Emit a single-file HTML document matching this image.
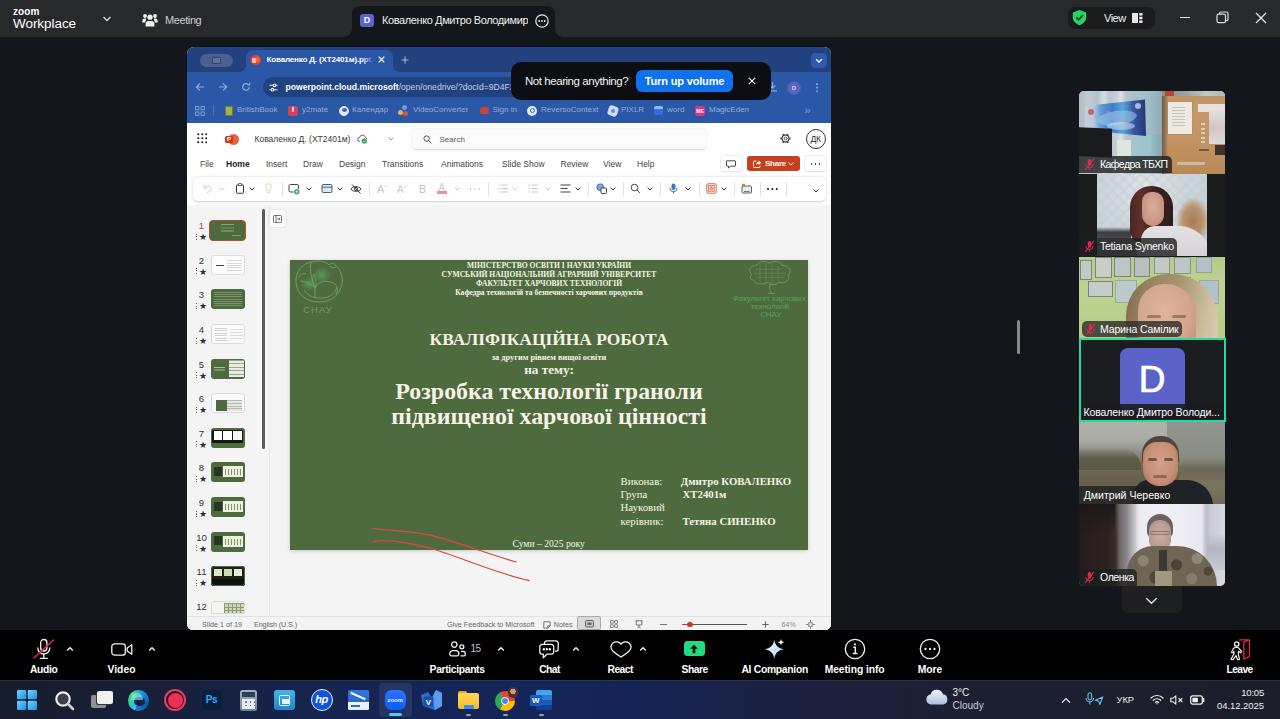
<!DOCTYPE html>
<html lang="uk">
<head>
<meta charset="utf-8">
<title>Zoom Meeting</title>
<style>
*{box-sizing:border-box;margin:0;padding:0}
html,body{width:1280px;height:719px;overflow:hidden;background:#13161a;font-family:"Liberation Sans",sans-serif;}
.a{position:absolute}
#root{position:relative;width:1280px;height:719px;overflow:hidden;background:#13161a}
/* top bar */
#top{left:0;top:0;width:1280px;height:37px;background:#28292b}
#top .t{color:#fff;white-space:nowrap}
/* shared screen */
#share{left:187px;top:47px;width:644px;height:583px;background:#f4f4f4;border-radius:7px 7px 6px 6px;overflow:hidden}
#tabstrip{left:0;top:0;width:644px;height:25px;background:#22417f}
#navbar{left:0;top:25px;width:644px;height:50.800px;background:#2b57a7}
#pphead{left:0;top:75px;width:644px;height:83px;background:#fff}
/* bottom zoom toolbar */
#zbar{left:0;top:630px;width:1280px;height:50px;background:#000}
#zbar .l{color:#fff;font-size:12px;font-weight:bold;white-space:nowrap;transform:translateX(-50%);top:32px;letter-spacing:-0.1px}
/* taskbar */
#task{left:0;top:680px;width:1280px;height:39px;background:linear-gradient(90deg,#171c2b 0%,#17213d 14%,#152452 28%,#14255a 42%,#162454 50%,#1b2142 60%,#1d2033 75%,#1c1e29 100%)}
/* tiles */
.tile{left:1079px;width:146px;height:82px;overflow:hidden;background:#1a1c1f}
.nm{left:0;bottom:0;height:17px;background:rgba(20,20,22,.72);color:#fff;font-size:12px;line-height:17px;white-space:nowrap;padding:0 5px 0 5px;border-radius:0 4px 0 0}
</style>
</head>
<body>
<div id="root">

<!-- TOP BAR -->
<div id="top" class="a">
  <div class="a t" style="left:13px;top:6px;font-size:10px;font-weight:bold;letter-spacing:.1px;line-height:11px">zoom</div>
  <div class="a t" style="left:13px;top:16px;font-size:13.5px;letter-spacing:-.05px;line-height:16px">Workplace</div>
  <svg class="a" style="left:102px;top:15px" width="10" height="8" viewBox="0 0 10 8"><path d="M1.5 2 L5 5.5 L8.5 2" fill="none" stroke="#ddd" stroke-width="1.3"/></svg>
  <svg class="a" style="left:142px;top:12px" width="16" height="16" viewBox="0 0 16 16" fill="#f2f2f2"><circle cx="8" cy="5.2" r="2.6"/><circle cx="3" cy="4" r="1.9"/><circle cx="13" cy="4" r="1.9"/><path d="M3.6 14.5 v-2.6 a3 3 0 0 1 3-3 h2.8 a3 3 0 0 1 3 3 v2.6 z"/><path d="M0.3 10.5 v-1.5 a2.4 2.4 0 0 1 2.4-2.4 h1.6 l-1.2 3.9z"/><path d="M15.7 10.5 v-1.5 a2.4 2.4 0 0 0 -2.4-2.4 h-1.6 l1.2 3.9z"/></svg>
  <div class="a t" style="left:165px;top:14px;font-size:11px;letter-spacing:-.4px;color:#cfcfcf">Meeting</div>
  <!-- active tab -->
  <div class="a" style="left:352px;top:6px;width:203px;height:31px;background:#13161a;border-radius:8px 8px 0 0"></div>
  <div class="a" style="left:344px;top:29px;width:8px;height:8px;background:radial-gradient(circle at 0 0,#28292b 7.5px,#13161a 8px)"></div>
  <div class="a" style="left:555px;top:29px;width:8px;height:8px;background:radial-gradient(circle at 100% 0,#28292b 7.5px,#13161a 8px)"></div>
  <div class="a" style="left:360px;top:14px;width:14px;height:13px;border-radius:3px;background:#5a63cf;color:#fff;font-size:9px;font-weight:bold;text-align:center;line-height:13px">D</div>
  <div class="a t" style="left:382px;top:14px;width:146px;overflow:hidden;font-size:11px;letter-spacing:-.4px;color:#f0f0f0">Коваленко Дмитро Володимирович</div>
  <svg class="a" style="left:534px;top:13px" width="16" height="16" viewBox="0 0 16 16"><circle cx="8" cy="8" r="6.2" fill="none" stroke="#e8e8e8" stroke-width="1.2"/><circle cx="5.2" cy="8" r=".9" fill="#e8e8e8"/><circle cx="8" cy="8" r=".9" fill="#e8e8e8"/><circle cx="10.8" cy="8" r=".9" fill="#e8e8e8"/></svg>
  <!-- view pill -->
  <div class="a" style="left:1068px;top:7px;width:87px;height:22px;border-radius:7px;background:#1a1b1d"></div>
  <svg class="a" style="left:1071px;top:9px" width="17" height="17" viewBox="0 0 17 17"><path d="M8.5 1 L15.2 3.4 V8.2 C15.2 12 12.2 14.8 8.5 16.2 C4.8 14.8 1.8 12 1.8 8.2 V3.4 Z" fill="#25d366"/><path d="M5.2 8.4 L7.6 10.8 L11.9 6.2" fill="none" stroke="#0b3d1c" stroke-width="1.7"/></svg>
  <div class="a t" style="left:1104px;top:12px;font-size:11px;letter-spacing:-.5px;color:#f0f0f0">View</div>
  <svg class="a" style="left:1132px;top:13px" width="11" height="10" viewBox="0 0 11 10" fill="#e8e8e8"><rect x="0" y="0" width="6" height="10"/><rect x="7.2" y="0" width="3.3" height="2.6"/><rect x="7.2" y="3.7" width="3.3" height="2.6"/><rect x="7.2" y="7.4" width="3.3" height="2.6"/></svg>
  <!-- window controls -->
  <div class="a" style="left:1180px;top:17px;width:10px;height:1.3px;background:#e0e0e0"></div>
  <svg class="a" style="left:1216px;top:11px" width="13" height="13" viewBox="0 0 13 13" fill="none" stroke="#e0e0e0" stroke-width="1.2"><rect x="1" y="3.2" width="8.5" height="8.5" rx="1.6"/><path d="M3.5 3 V2.4 A1.4 1.4 0 0 1 4.9 1 H10.4 A1.6 1.6 0 0 1 12 2.6 V8.2 A1.4 1.4 0 0 1 10.6 9.6 H9.8"/></svg>
  <svg class="a" style="left:1255px;top:12px" width="12" height="12" viewBox="0 0 12 12"><path d="M1 1 L11 11 M11 1 L1 11" stroke="#e8e8e8" stroke-width="1.3"/></svg>
</div>

<!-- SHARED SCREEN -->
<div id="share" class="a">
  <div id="tabstrip" class="a"></div>
  <div id="navbar" class="a"></div>
  <!-- tab search pill -->
  <div class="a" style="left:13px;top:7px;width:33px;height:12.5px;border-radius:7px;background:#4b608f"></div>
  <div class="a" style="left:25px;top:10px;width:9px;height:7px;border:1px solid #2d4272;border-radius:1px;background:#5d719c"></div>
  <!-- active tab -->
  <div class="a" style="left:59px;top:3px;width:147px;height:22px;background:#2b57a7;border-radius:7px 7px 0 0"></div>
  <div class="a" style="left:53px;top:19px;width:6px;height:6px;background:radial-gradient(circle at 0 0,#22417f 5.5px,#2b57a7 6px)"></div>
  <div class="a" style="left:206px;top:19px;width:6px;height:6px;background:radial-gradient(circle at 100% 0,#22417f 5.5px,#2b57a7 6px)"></div>
  <div class="a" style="left:63px;top:7.5px;width:10.5px;height:10.5px;border-radius:50%;background:radial-gradient(circle at 60% 45%,#ff7a4a 0,#e2432a 45%,#c8331f 100%)"></div>
  <div class="a" style="left:65px;top:10.5px;width:4px;height:5px;background:#f7d9cf;border-radius:1px;opacity:.85"></div>
  <div class="a" style="left:79.5px;top:7.5px;width:105px;overflow:hidden;white-space:nowrap;color:#fff;font-size:8px;font-weight:bold;letter-spacing:-.15px;line-height:10px">Коваленко Д. (ХТ2401м).pptx</div>
  <div class="a" style="left:176px;top:6px;width:10px;height:13px;background:linear-gradient(90deg,rgba(44,88,169,0),#2b57a7)"></div>
  <svg class="a" style="left:191px;top:9px" width="7" height="7" viewBox="0 0 7 7"><path d="M.7 .7 L6.3 6.3 M6.3 .7 L.7 6.3" stroke="#fff" stroke-width="1.2"/></svg>
  <svg class="a" style="left:213.500px;top:8.5px" width="8" height="8" viewBox="0 0 8 8"><path d="M4 .5 V7.500 M.5 4 H7.500" stroke="#9db3dc" stroke-width="1.100"/></svg>
  <!-- chevron btn -->
  <div class="a" style="left:623.500px;top:5.500px;width:16.500px;height:15.500px;border-radius:4.500px;background:#305aab"></div>
  <svg class="a" style="left:628px;top:10.500px" width="8" height="6" viewBox="0 0 8 6"><path d="M1.200 1.300 L4 4.100 L6.800 1.300" fill="none" stroke="#fff" stroke-width="1.300"/></svg>
  <!-- nav icons -->
  <svg class="a" style="left:8px;top:35px" width="10" height="10" viewBox="0 0 10 10" fill="none" stroke="#8fa9dc" stroke-width="1.200"><path d="M9 5 H1.500 M5 1.300 L1.300 5 L5 8.700"/></svg>
  <svg class="a" style="left:31px;top:35px" width="10" height="10" viewBox="0 0 10 10" fill="none" stroke="#8fa9dc" stroke-width="1.200"><path d="M1 5 H8.500 M5 1.300 L8.700 5 L5 8.700"/></svg>
  <svg class="a" style="left:54px;top:35px" width="10" height="10" viewBox="0 0 10 10" fill="none" stroke="#8fa9dc" stroke-width="1.200"><path d="M8.300 5 A3.300 3.300 0 1 1 7.300 2.600 M8.600 .8 V3 H6.400"/></svg>
  <!-- url pill -->
  <div class="a" style="left:76px;top:30px;width:470px;height:19.500px;border-radius:10px;background:#20427f"></div>
  <svg class="a" style="left:82px;top:35.500px" width="9" height="9" viewBox="0 0 9 9" fill="none" stroke="#e6ecf8" stroke-width="1.100"><path d="M.5 2.300 H4 M7 2.300 H8.500 M.5 6.700 H2 M5 6.700 H8.500"/><circle cx="5.500" cy="2.300" r="1.300"/><circle cx="3.500" cy="6.700" r="1.300"/></svg>
  <div class="a" style="left:98.500px;top:34.500px;white-space:nowrap;color:#fff;font-size:8.600px;font-weight:bold;line-height:11px">powerpoint.cloud.microsoft<span style="font-weight:normal;color:#c3cfea">/open/onedrive/?docId=9D4F2A7C&amp;wdo=2</span></div>
  <!-- nav right -->
  <svg class="a" style="left:580px;top:34px" width="11" height="11" viewBox="0 0 11 11" fill="none" stroke="#8fa9dc" stroke-width="1.200"><path d="M5.500 1 V7 M2.800 4.500 L5.500 7.200 L8.200 4.500 M1 9.800 H10"/></svg>
  <div class="a" style="left:601px;top:34.500px;width:12px;height:12px;border-radius:50%;background:#5f62c4;box-shadow:0 0 0 1px rgba(110,110,210,.45);color:#d9d6f5;font-size:6px;font-weight:bold;text-align:center;line-height:12px">D</div>
  <div class="a" style="left:629.200px;top:36px;width:1.700px;height:1.700px;border-radius:50%;background:#7f9bd6;box-shadow:0 3.600px 0 #7f9bd6,0 7.200px 0 #7f9bd6"></div>
  <!-- bookmarks -->
  <div id="bm" class="a" style="left:0;top:54px;width:644px;height:22px;font-size:8px;color:#96acd9;white-space:nowrap;line-height:18px">
    <svg class="a" style="left:7.500px;top:4.500px" width="10" height="10" viewBox="0 0 10 10" fill="none" stroke="#7f9ad2" stroke-width="1"><rect x=".5" y=".5" width="3.300" height="3.300"/><rect x="6" y=".5" width="3.300" height="3.300"/><rect x=".5" y="6" width="3.300" height="3.300"/><rect x="6" y="6" width="3.300" height="3.300"/></svg>
    <div class="a" style="left:26px;top:4px;width:1px;height:11px;background:#4a6db5"></div>
    <div class="a" style="left:38px;top:4.500px;width:7.500px;height:10px;background:#a8b24a;border:1.500px solid #6f7d2c;border-radius:1px"></div>
    <div class="a" style="left:50px;top:0">BritishBook</div>
    <div class="a" style="left:101px;top:4.500px;width:9.500px;height:10px;background:#d2415a;border-radius:2px"></div>
    <div class="a" style="left:104.500px;top:6px;width:2.500px;height:5px;background:#f6d0d6"></div>
    <div class="a" style="left:115px;top:0">y2mate</div>
    <div class="a" style="left:152px;top:4.500px;width:10px;height:10px;border-radius:50%;background:#e8eef9;border:1.500px solid #dfe7f6"></div>
    <div class="a" style="left:155px;top:7px;width:5px;height:4px;border-radius:50%;background:#3b66b6"></div>
    <div class="a" style="left:165px;top:0">Календар</div>
    <div class="a" style="left:211px;top:9px;width:5px;height:5px;border-radius:50%;background:#e9b43a"></div>
    <div class="a" style="left:216px;top:9.500px;width:5px;height:5px;border-radius:50%;background:#d9534f"></div>
    <div class="a" style="left:214.500px;top:4px;width:5px;height:5px;border-radius:50%;background:#5fa0e8"></div>
    <div class="a" style="left:226px;top:0">VideoConverter</div>
    <div class="a" style="left:293px;top:6px;width:9px;height:7px;border-radius:2px;background:#c8413f"></div>
    <div class="a" style="left:305.500px;top:0">Sign in</div>
    <div class="a" style="left:340px;top:4.500px;width:10px;height:10px;border-radius:50%;background:#e4ebf8"></div>
    <div class="a" style="left:342.500px;top:7px;width:5px;height:5px;border-radius:50%;border:1.500px solid #3b66b6"></div>
    <div class="a" style="left:354px;top:0">ReversoContext</div>
    <div class="a" style="left:421px;top:4.500px;width:10px;height:10px;border-radius:3px;background:#cfdcf3;transform:rotate(20deg)"></div>
    <div class="a" style="left:424px;top:7.500px;width:4px;height:4px;border-radius:50%;background:#5f8fe0"></div>
    <div class="a" style="left:434px;top:0">PIXLR</div>
    <div class="a" style="left:467px;top:5px;width:9px;height:9px;border-radius:2px;background:#2f6fe0;border-top:3px solid #8fb8f5"></div>
    <div class="a" style="left:480px;top:0">word</div>
    <div class="a" style="left:508px;top:4.500px;width:10px;height:10px;border-radius:2px;background:#d6357f;color:#fff;font-size:5px;font-weight:bold;line-height:10px;text-align:center">ME</div>
    <div class="a" style="left:522px;top:0">MagicEden</div>
    <div class="a" style="left:617.500px;top:0;font-size:11px;color:#7f9bd6">»</div>
  </div>
  <div class="a" style="left:0;top:75.800px;width:644px;height:83.200px;background:#fff"></div>
  <div class="a" style="left:0;top:158px;width:644px;height:425px;background:#f4f4f4"></div>
  <svg class="a" style="left:9.5px;top:86px" width="10.500" height="10.500" viewBox="0 0 10.200 10.200" fill="#222"><circle cx="1.2" cy="1.2" r="1.050"/><circle cx="1.2" cy="5.1" r="1.050"/><circle cx="1.2" cy="9.0" r="1.050"/><circle cx="5.1" cy="1.2" r="1.050"/><circle cx="5.1" cy="5.1" r="1.050"/><circle cx="5.1" cy="9.0" r="1.050"/><circle cx="9.0" cy="1.2" r="1.050"/><circle cx="9.0" cy="5.1" r="1.050"/><circle cx="9.0" cy="9.0" r="1.050"/></svg>
  <div class="a" style="left:41px;top:86.5px;width:11px;height:11px;border-radius:50%;background:#e8603c"></div>
  <div class="a" style="left:38px;top:88.5px;width:8px;height:7.500px;border-radius:1.500px;background:#c43e1c;color:#fff;font-size:6px;font-weight:bold;line-height:7.500px;text-align:center">P</div>
  <div class="a" style="left:67.5px;top:86.700px;font-size:8.500px;color:#3a3a3a;white-space:nowrap;line-height:11px">Коваленко Д. (ХТ2401м)</div>
  <svg class="a" style="left:169.5px;top:87px" width="11" height="10" viewBox="0 0 11 10"><path d="M3 7.500 H2.600 A2 2 0 0 1 2.600 3.500 A3 3 0 0 1 8.400 3.200 A2.100 2.100 0 0 1 9.600 5" fill="none" stroke="#666" stroke-width="1"/><circle cx="7.300" cy="7" r="2.600" fill="#2e9b57"/><path d="M6.100 7 L7 7.900 L8.500 6.200" fill="none" stroke="#fff" stroke-width=".8"/></svg>
  <svg class="a" style="left:201px;top:90px" width="6" height="4" viewBox="0 0 6 4"><path d="M.6 .6 L3 3 L5.400 .6" fill="none" stroke="#999" stroke-width="1"/></svg>
  <div class="a" style="left:225px;top:82px;width:294px;height:20px;border-radius:4px;background:#fbfbfb;box-shadow:0 .5px 2px rgba(0,0,0,.16)"></div>
  <svg class="a" style="left:236px;top:87.5px" width="9" height="9" viewBox="0 0 9 9" fill="none" stroke="#555" stroke-width="1"><circle cx="3.600" cy="3.600" r="2.700"/><path d="M5.600 5.600 L8.300 8.300"/></svg>
  <div class="a" style="left:252.5px;top:86.5px;font-size:8px;color:#555;line-height:11px">Search</div>
  <svg class="a" style="left:593.30px;top:86.00px" width="11" height="11" viewBox="0 0 11 11" fill="none" stroke="#3a3a3a"><circle cx="5.500" cy="5.500" r="3.500" stroke-width="1" fill="#fff"/><path d="M9.20 5.50 L10.50 5.50" stroke-width="2.100"/><path d="M7.35 8.70 L8.00 9.83" stroke-width="2.100"/><path d="M3.65 8.70 L3.00 9.83" stroke-width="2.100"/><path d="M1.80 5.50 L0.50 5.50" stroke-width="2.100"/><path d="M3.65 2.30 L3.00 1.17" stroke-width="2.100"/><path d="M7.35 2.30 L8.00 1.17" stroke-width="2.100"/><circle cx="5.500" cy="5.500" r="3" stroke="none" fill="#fff"/><circle cx="5.500" cy="5.500" r="3.500" stroke-width=".9"/><circle cx="5.500" cy="5.500" r="1.400" stroke-width=".9"/></svg>
  <div class="a" style="left:618.5px;top:81.8px;width:20px;height:20px;border-radius:50%;border:1px solid #333;color:#2a2a2a;font-size:8.500px;line-height:18.500px;text-align:center;letter-spacing:-.3px">ДК</div>
  <div class="a" style="left:13px;top:111.700px;font-size:8.500px;color:#444;white-space:nowrap;line-height:11px">File</div>
  <div class="a" style="left:39px;top:111.700px;font-size:8.500px;font-weight:bold;color:#222;white-space:nowrap;line-height:11px">Home</div>
  <div class="a" style="left:79px;top:111.700px;font-size:8.500px;color:#444;white-space:nowrap;line-height:11px">Insert</div>
  <div class="a" style="left:116px;top:111.700px;font-size:8.500px;color:#444;white-space:nowrap;line-height:11px">Draw</div>
  <div class="a" style="left:152px;top:111.700px;font-size:8.500px;color:#444;white-space:nowrap;line-height:11px">Design</div>
  <div class="a" style="left:195px;top:111.700px;font-size:8.500px;color:#444;white-space:nowrap;line-height:11px">Transitions</div>
  <div class="a" style="left:254px;top:111.700px;font-size:8.500px;color:#444;white-space:nowrap;line-height:11px">Animations</div>
  <div class="a" style="left:315px;top:111.700px;font-size:8.500px;color:#444;white-space:nowrap;line-height:11px">Slide Show</div>
  <div class="a" style="left:373.5px;top:111.700px;font-size:8.500px;color:#444;white-space:nowrap;line-height:11px">Review</div>
  <div class="a" style="left:416px;top:111.700px;font-size:8.500px;color:#444;white-space:nowrap;line-height:11px">View</div>
  <div class="a" style="left:450px;top:111.700px;font-size:8.500px;color:#444;white-space:nowrap;line-height:11px">Help</div>
  <div class="a" style="left:534px;top:109px;width:20.500px;height:15px;border-radius:3px;background:#fff;box-shadow:0 0 0 .6px #e4e4e4,0 .5px 1.500px rgba(0,0,0,.14)"></div>
  <svg class="a" style="left:539px;top:112.5px" width="10" height="9" viewBox="0 0 10 9" fill="none" stroke="#333" stroke-width=".9"><path d="M1 .8 H9 A.5 .5 0 0 1 9.500 1.300 V5.700 A.5 .5 0 0 1 9 6.200 H4.500 L2.500 8 V6.200 H1 A.5 .5 0 0 1 .5 5.700 V1.300 A.5 .5 0 0 1 1 .8Z"/></svg>
  <div class="a" style="left:560px;top:109px;width:52.500px;height:15px;border-radius:3px;background:#c6401d"></div>
  <svg class="a" style="left:565.5px;top:112.5px" width="9" height="8" viewBox="0 0 9 8" fill="none" stroke="#fff" stroke-width=".9"><path d="M3.500 1 H1.500 A1 1 0 0 0 .5 2 V6.500 A1 1 0 0 0 1.500 7.500 H6 A1 1 0 0 0 7 6.500 V5.800"/><path d="M5.500 .6 L8.300 2.800 L5.500 5 V3.700 C4.300 3.700 3.500 4.200 3 5.200 C3 3.300 4 2.100 5.500 1.900Z" fill="#fff" stroke="none"/></svg>
  <div class="a" style="left:578px;top:111px;font-size:8px;font-weight:bold;color:#fff;line-height:11px;letter-spacing:-.25px">Share</div>
  <svg class="a" style="left:600.5px;top:115px" width="6" height="4" viewBox="0 0 6 4"><path d="M.6 .6 L3 3 L5.400 .6" fill="none" stroke="#fff" stroke-width="1"/></svg>
  <div class="a" style="left:618px;top:109px;width:20.500px;height:15px;border-radius:3px;background:#fff;box-shadow:0 0 0 .6px #e4e4e4,0 .5px 1.500px rgba(0,0,0,.14)"></div>
  <div class="a" style="left:623.5px;top:116px;width:1.600px;height:1.600px;border-radius:50%;background:#333;box-shadow:4px 0 0 #333,8px 0 0 #333"></div>
  <div class="a" style="left:5.5px;top:129.5px;width:633.500px;height:24.500px;border-radius:5px;background:#fff;box-shadow:0 .5px 2.500px rgba(0,0,0,.2)"></div>
  <svg class="a" style="left:14.5px;top:136.2px" width="11" height="11" viewBox="0 0 11 11" fill="none"><path d="M2 1.500 V5 H5.500 M2.200 4.800 C3.500 2.500 7 2 8.500 4.200 C9.800 6.200 8 8.500 5 9.700" stroke="#c8c8c8" stroke-width="1"/></svg>
  <svg class="a" style="left:31.5px;top:139.7px" width="6" height="4" viewBox="0 0 6 4"><path d="M.6 .6 L3 3 L5.400 .6" fill="none" stroke="#c8c8c8" stroke-width="1"/></svg>
  <svg class="a" style="left:48.0px;top:136.2px" width="10" height="11" viewBox="0 0 10 11" fill="none"><rect x="1.500" y="1.800" width="7" height="8.500" rx="1" stroke="#333" stroke-width="1"/><rect x="3.300" y=".6" width="3.400" height="2" rx=".6" fill="#fff" stroke="#333" stroke-width=".8"/></svg>
  <svg class="a" style="left:61.5px;top:139.7px" width="6" height="4" viewBox="0 0 6 4"><path d="M.6 .6 L3 3 L5.400 .6" fill="none" stroke="#333" stroke-width="1"/></svg>
  <svg class="a" style="left:76.8px;top:136.2px" width="9" height="11" viewBox="0 0 9 11" fill="none"><path d="M2 1 H7 V5 L5.800 6 V9.500 H3.200 V6 L2 5Z" stroke="#e6d6a8" stroke-width="1"/></svg>
  <div class="a" style="left:94.5px;top:135px;width:1px;height:14px;background:#e2e2e2"></div>
  <svg class="a" style="left:101.0px;top:135.7px" width="12" height="12" viewBox="0 0 12 12" fill="none"><rect x="1" y="1.500" width="9.500" height="7.500" rx="1.400" stroke="#444" stroke-width="1"/><circle cx="8.800" cy="8.800" r="3" fill="#2e9b57" stroke="#fff" stroke-width=".7"/><path d="M8.800 7.300 V10.300 M7.300 8.800 H10.300" stroke="#fff" stroke-width=".8"/></svg>
  <svg class="a" style="left:119px;top:139.7px" width="6" height="4" viewBox="0 0 6 4"><path d="M.6 .6 L3 3 L5.400 .6" fill="none" stroke="#333" stroke-width="1"/></svg>
  <svg class="a" style="left:134.3px;top:136.2px" width="12" height="11" viewBox="0 0 12 11" fill="none"><rect x="1" y="1.500" width="10" height="8" rx="1.200" stroke="#3f5f80" stroke-width="1" fill="#dfe9f3"/><path d="M1 4.200 H11" stroke="#3f5f80" stroke-width=".9"/></svg>
  <svg class="a" style="left:149.5px;top:139.7px" width="6" height="4" viewBox="0 0 6 4"><path d="M.6 .6 L3 3 L5.400 .6" fill="none" stroke="#333" stroke-width="1"/></svg>
  <svg class="a" style="left:163.0px;top:135.7px" width="12" height="12" viewBox="0 0 12 12" fill="none"><path d="M1 6 C3 2.800 9 2.800 11 6 C9 9.200 3 9.200 1 6Z" stroke="#333" stroke-width=".9"/><circle cx="6" cy="6" r="1.600" stroke="#333" stroke-width=".9"/><path d="M2 1.500 L10.500 10.500" stroke="#333" stroke-width="1"/></svg>
  <div class="a" style="left:182px;top:135px;width:1px;height:14px;background:#e2e2e2"></div>
  <div class="a" style="left:190px;top:135.5px;font-size:11px;color:#c8c8c8;line-height:13px">A<span style="font-size:6px;vertical-align:top;line-height:8px">^</span></div>
  <div class="a" style="left:210px;top:136px;font-size:10px;color:#c8c8c8;line-height:13px">A<span style="font-size:6px;vertical-align:top;line-height:8px">˅</span></div>
  <div class="a" style="left:232px;top:135.5px;font-size:10.500px;color:#c0c0c0;line-height:13px">B</div>
  <div class="a" style="left:251.5px;top:134.5px;font-size:10px;color:#c8c8c8;line-height:12px">A</div>
  <div class="a" style="left:250px;top:144.3px;width:10px;height:3px;background:#ef8f9a;border-radius:.5px"></div>
  <svg class="a" style="left:266.5px;top:139.7px" width="6" height="4" viewBox="0 0 6 4"><path d="M.6 .6 L3 3 L5.400 .6" fill="none" stroke="#c8c8c8" stroke-width="1"/></svg>
  <div class="a" style="left:282.5px;top:141px;width:1.600px;height:1.600px;border-radius:50%;background:#bbb;box-shadow:4.400px 0 0 #bbb,8.800px 0 0 #bbb"></div>
  <div class="a" style="left:301px;top:135px;width:1px;height:14px;background:#e2e2e2"></div>
  <svg class="a" style="left:310.5px;top:136.2px" width="11" height="11" viewBox="0 0 11 11" fill="none"><path d="M3 2 H10 M3 5.500 H10 M3 9 H10" stroke="#c8c8c8" stroke-width="1"/><circle cx="1" cy="2" r=".7" fill="#c8c8c8"/><circle cx="1" cy="5.500" r=".7" fill="#c8c8c8"/><circle cx="1" cy="9" r=".7" fill="#c8c8c8"/></svg>
  <svg class="a" style="left:324.6px;top:139.7px" width="6" height="4" viewBox="0 0 6 4"><path d="M.6 .6 L3 3 L5.400 .6" fill="none" stroke="#c8c8c8" stroke-width="1"/></svg>
  <svg class="a" style="left:340.5px;top:136.2px" width="11" height="11" viewBox="0 0 11 11" fill="none"><path d="M3.500 2 H10 M3.500 5.500 H10 M3.500 9 H10" stroke="#c8c8c8" stroke-width="1"/><path d="M1 1 V3 M1 4.500 V6.500 M1 8 V10" stroke="#c8c8c8" stroke-width=".8"/></svg>
  <svg class="a" style="left:358px;top:139.7px" width="6" height="4" viewBox="0 0 6 4"><path d="M.6 .6 L3 3 L5.400 .6" fill="none" stroke="#c8c8c8" stroke-width="1"/></svg>
  <svg class="a" style="left:372.5px;top:136.2px" width="11" height="11" viewBox="0 0 11 11" fill="none"><path d="M.5 2 H10.500 M.5 5.500 H7.500 M.5 9 H10.500" stroke="#444" stroke-width="1"/></svg>
  <svg class="a" style="left:388px;top:139.7px" width="6" height="4" viewBox="0 0 6 4"><path d="M.6 .6 L3 3 L5.400 .6" fill="none" stroke="#333" stroke-width="1"/></svg>
  <div class="a" style="left:400.6px;top:135px;width:1px;height:14px;background:#e2e2e2"></div>
  <svg class="a" style="left:408.5px;top:136.2px" width="11" height="11" viewBox="0 0 11 11" fill="none"><circle cx="4.300" cy="4.300" r="3.500" fill="#7aa7d8" stroke="#3d6fa8" stroke-width=".8"/><rect x="5" y="5" width="5.500" height="5.500" rx="1" fill="#fff" stroke="#333" stroke-width=".9"/></svg>
  <svg class="a" style="left:423px;top:139.7px" width="6" height="4" viewBox="0 0 6 4"><path d="M.6 .6 L3 3 L5.400 .6" fill="none" stroke="#333" stroke-width="1"/></svg>
  <div class="a" style="left:435.7px;top:135px;width:1px;height:14px;background:#e2e2e2"></div>
  <svg class="a" style="left:442.5px;top:136.2px" width="11" height="11" viewBox="0 0 11 11" fill="none"><circle cx="4.500" cy="4.500" r="3.300" stroke="#444" stroke-width="1"/><path d="M7 7 L10 10" stroke="#444" stroke-width="1"/></svg>
  <svg class="a" style="left:459.5px;top:139.7px" width="6" height="4" viewBox="0 0 6 4"><path d="M.6 .6 L3 3 L5.400 .6" fill="none" stroke="#333" stroke-width="1"/></svg>
  <div class="a" style="left:473px;top:135px;width:1px;height:14px;background:#e2e2e2"></div>
  <svg class="a" style="left:480.5px;top:136.2px" width="11" height="11" viewBox="0 0 11 11" fill="none"><rect x="3.500" y=".5" width="4" height="6.500" rx="2" fill="#3c78c8"/><path d="M1.800 5 A3.700 3.700 0 0 0 9.200 5 M5.500 8.700 V10.500" stroke="#2f5f9f" stroke-width=".9"/></svg>
  <svg class="a" style="left:498px;top:139.7px" width="6" height="4" viewBox="0 0 6 4"><path d="M.6 .6 L3 3 L5.400 .6" fill="none" stroke="#333" stroke-width="1"/></svg>
  <div class="a" style="left:512px;top:135px;width:1px;height:14px;background:#e2e2e2"></div>
  <svg class="a" style="left:519.2px;top:136.2px" width="11" height="11" viewBox="0 0 11 11" fill="none"><rect x=".8" y=".8" width="9.400" height="9.400" rx="1" stroke="#c75a3a" stroke-width=".9"/><rect x="2.600" y="2.600" width="2.400" height="2.400" stroke="#c75a3a" stroke-width=".7"/><rect x="6" y="2.600" width="2.400" height="2.400" stroke="#c75a3a" stroke-width=".7"/><rect x="2.600" y="6" width="2.400" height="2.400" stroke="#c75a3a" stroke-width=".7"/><rect x="6" y="6" width="2.400" height="2.400" stroke="#c75a3a" stroke-width=".7"/></svg>
  <svg class="a" style="left:534.4px;top:139.7px" width="6" height="4" viewBox="0 0 6 4"><path d="M.6 .6 L3 3 L5.400 .6" fill="none" stroke="#333" stroke-width="1"/></svg>
  <div class="a" style="left:546.7px;top:135px;width:1px;height:14px;background:#e2e2e2"></div>
  <svg class="a" style="left:554.0px;top:136.2px" width="11" height="11" viewBox="0 0 11 11" fill="none"><rect x="1" y="3" width="9.500" height="7" rx="1" stroke="#555" stroke-width=".9" fill="#e3ecf5"/><rect x="1" y=".8" width="3" height="3" fill="#d9822b"/><path d="M3 8.500 H8.500" stroke="#555" stroke-width=".8"/></svg>
  <div class="a" style="left:572.5px;top:135px;width:1px;height:14px;background:#e2e2e2"></div>
  <div class="a" style="left:580px;top:141px;width:1.700px;height:1.700px;border-radius:50%;background:#333;box-shadow:4.400px 0 0 #333,8.800px 0 0 #333"></div>
  <div class="a" style="left:598.5px;top:135px;width:1px;height:14px;background:#e2e2e2"></div>
  <svg class="a" style="left:625.5px;top:142.4px" width="6" height="4" viewBox="0 0 6 4"><path d="M.6 .6 L3 3 L5.400 .6" fill="none" stroke="#333" stroke-width="1"/></svg>
  <div class="a" style="left:81.5px;top:163px;width:17.500px;height:17px;border-radius:3px;background:#fbfbfb;box-shadow:0 0 0 .6px #dedede"></div>
  <svg class="a" style="left:85.5px;top:167.5px" width="9" height="8" viewBox="0 0 9 8" fill="none" stroke="#555" stroke-width=".8"><rect x=".5" y=".5" width="8" height="7" rx=".8"/><path d="M3 .5 V7.500 M4.300 4 H7 M5.800 2.800 L7 4 L5.800 5.200"/></svg>
  <div class="a" style="left:82px;top:159px;width:1px;height:410px;background:#e6e6e6"></div>
  <div class="a" style="left:75px;top:161.5px;width:3px;height:240px;border-radius:1.500px;background:#5a5a5a"></div>
  <div class="a" style="left:8.500px;top:174px;width:12px;text-align:center;font-size:9.5px;color:#c43e1c;line-height:10px">1</div>
  <div class="a" style="left:12px;top:185.00px;font-size:9px;color:#2a2a2a;line-height:10px">★</div>
  <div class="a" style="left:8.500px;top:186.50px;width:1px;height:6px;background:repeating-linear-gradient(#666 0 1px,transparent 1px 2.500px)"></div>
  <div class="a" style="left:21.500px;top:172.500px;width:37.500px;height:21.500px;border-radius:4px;background:#4e6b3f;border:1.800px solid #b5502c"></div>
  <div class="a" style="left:34px;top:177px;width:13px;height:1px;background:#8fa382;box-shadow:0 3.500px 0 #7f9572,0 6.500px 0 #98ab8b"></div>
  <div class="a" style="left:45px;top:188px;width:9px;height:1px;background:#82976f"></div>
  <div class="a" style="left:8.500px;top:208.7px;width:12px;text-align:center;font-size:9.5px;color:#333;line-height:10px">2</div>
  <div class="a" style="left:12px;top:219.70px;font-size:9px;color:#2a2a2a;line-height:10px">★</div>
  <div class="a" style="left:8.500px;top:221.20px;width:1px;height:6px;background:repeating-linear-gradient(#666 0 1px,transparent 1px 2.500px)"></div>
  <div class="a" style="left:23.5px;top:207.7px;width:34px;height:20px;border-radius:3px;background:#fdfdfd;border:.6px solid #dcdcdc;overflow:hidden"><div class="a" style="left:4px;top:9px;width:8px;height:1.500px;background:#444"></div><div class="a" style="left:15px;top:4px;width:15px;height:12px;background:repeating-linear-gradient(#d8d8d8 0 1px,transparent 1px 2.500px)"></div></div>
  <div class="a" style="left:8.500px;top:243.3px;width:12px;text-align:center;font-size:9.5px;color:#333;line-height:10px">3</div>
  <div class="a" style="left:12px;top:254.30px;font-size:9px;color:#2a2a2a;line-height:10px">★</div>
  <div class="a" style="left:8.500px;top:255.80px;width:1px;height:6px;background:repeating-linear-gradient(#666 0 1px,transparent 1px 2.500px)"></div>
  <div class="a" style="left:23.5px;top:242.3px;width:34px;height:20px;border-radius:3px;background:#4e6b3f;overflow:hidden"><div class="a" style="left:3px;top:3px;width:28px;height:14px;background:repeating-linear-gradient(#7b9170 0 1px,transparent 1px 2.200px)"></div></div>
  <div class="a" style="left:8.500px;top:278px;width:12px;text-align:center;font-size:9.5px;color:#333;line-height:10px">4</div>
  <div class="a" style="left:12px;top:289.00px;font-size:9px;color:#2a2a2a;line-height:10px">★</div>
  <div class="a" style="left:8.500px;top:290.50px;width:1px;height:6px;background:repeating-linear-gradient(#666 0 1px,transparent 1px 2.500px)"></div>
  <div class="a" style="left:23.5px;top:277px;width:34px;height:20px;border-radius:3px;background:#fbfbfb;border:.6px solid #dcdcdc;overflow:hidden"><div class="a" style="left:3px;top:3px;width:12px;height:14px;background:repeating-linear-gradient(#d0d0d0 0 1px,transparent 1px 2.500px)"></div><div class="a" style="left:18px;top:4px;width:13px;height:11px;background:repeating-linear-gradient(#dcdcdc 0 1px,transparent 1px 3px)"></div></div>
  <div class="a" style="left:8.500px;top:312.5px;width:12px;text-align:center;font-size:9.5px;color:#333;line-height:10px">5</div>
  <div class="a" style="left:12px;top:323.50px;font-size:9px;color:#2a2a2a;line-height:10px">★</div>
  <div class="a" style="left:8.500px;top:325.00px;width:1px;height:6px;background:repeating-linear-gradient(#666 0 1px,transparent 1px 2.500px)"></div>
  <div class="a" style="left:23.5px;top:311.5px;width:34px;height:20px;border-radius:3px;background:#4e6b3f;overflow:hidden"><div class="a" style="left:18px;top:1.500px;width:15px;height:17px;background:#e9ece4;background-image:repeating-linear-gradient(#9aa590 0 1px,transparent 1px 3.400px)"></div><div class="a" style="left:3px;top:8px;width:11px;height:1px;background:#a9b99b;box-shadow:0 2.500px 0 #a9b99b"></div></div>
  <div class="a" style="left:8.500px;top:347px;width:12px;text-align:center;font-size:9.5px;color:#333;line-height:10px">6</div>
  <div class="a" style="left:12px;top:358.00px;font-size:9px;color:#2a2a2a;line-height:10px">★</div>
  <div class="a" style="left:8.500px;top:359.50px;width:1px;height:6px;background:repeating-linear-gradient(#666 0 1px,transparent 1px 2.500px)"></div>
  <div class="a" style="left:23.5px;top:346px;width:34px;height:20px;border-radius:3px;background:#fbfbfb;border:.6px solid #dcdcdc;overflow:hidden"><div class="a" style="left:4px;top:6px;width:11px;height:11px;background:#4e6b3f"></div><div class="a" style="left:15px;top:6px;width:15px;height:11px;background:#e3e6df;background-image:repeating-linear-gradient(#b5bcae 0 1px,transparent 1px 2.800px)"></div></div>
  <div class="a" style="left:8.500px;top:381.7px;width:12px;text-align:center;font-size:9.5px;color:#333;line-height:10px">7</div>
  <div class="a" style="left:12px;top:392.70px;font-size:9px;color:#2a2a2a;line-height:10px">★</div>
  <div class="a" style="left:8.500px;top:394.20px;width:1px;height:6px;background:repeating-linear-gradient(#666 0 1px,transparent 1px 2.500px)"></div>
  <div class="a" style="left:23.5px;top:380.7px;width:34px;height:20px;border-radius:3px;background:#4e6b3f;overflow:hidden"><div class="a" style="left:1.500px;top:2px;width:31px;height:13.500px;background:#15170f;border-radius:1px"></div><div class="a" style="left:3px;top:3.500px;width:8.500px;height:9px;background:#fff"></div><div class="a" style="left:12.800px;top:3.500px;width:8.500px;height:9px;background:#fff"></div><div class="a" style="left:22.500px;top:3.500px;width:8.500px;height:9px;background:#f4f4f4"></div></div>
  <div class="a" style="left:8.500px;top:416.3px;width:12px;text-align:center;font-size:9.5px;color:#333;line-height:10px">8</div>
  <div class="a" style="left:12px;top:427.30px;font-size:9px;color:#2a2a2a;line-height:10px">★</div>
  <div class="a" style="left:8.500px;top:428.80px;width:1px;height:6px;background:repeating-linear-gradient(#666 0 1px,transparent 1px 2.500px)"></div>
  <div class="a" style="left:23.5px;top:415.3px;width:34px;height:20px;border-radius:3px;background:#4e6b3f;overflow:hidden"><div class="a" style="left:3px;top:4.500px;width:8px;height:9px;background:#2c3328"></div><div class="a" style="left:12px;top:4px;width:20px;height:11px;background:#eef0e2"></div><div class="a" style="left:14px;top:7px;width:16px;height:6px;background:repeating-linear-gradient(90deg,#7d9a5a 0 1.500px,transparent 1.500px 3px)"></div></div>
  <div class="a" style="left:8.500px;top:451px;width:12px;text-align:center;font-size:9.5px;color:#333;line-height:10px">9</div>
  <div class="a" style="left:12px;top:462.00px;font-size:9px;color:#2a2a2a;line-height:10px">★</div>
  <div class="a" style="left:8.500px;top:463.50px;width:1px;height:6px;background:repeating-linear-gradient(#666 0 1px,transparent 1px 2.500px)"></div>
  <div class="a" style="left:23.5px;top:450px;width:34px;height:20px;border-radius:3px;background:#4e6b3f;overflow:hidden"><div class="a" style="left:3px;top:4.500px;width:8px;height:9px;background:#2c3328"></div><div class="a" style="left:12px;top:4px;width:20px;height:11px;background:#eef0e2"></div><div class="a" style="left:14px;top:7px;width:16px;height:6px;background:repeating-linear-gradient(90deg,#7d9a5a 0 1.500px,transparent 1.500px 3px)"></div></div>
  <div class="a" style="left:8.500px;top:485.5px;width:12px;text-align:center;font-size:9.5px;color:#333;line-height:10px">10</div>
  <div class="a" style="left:12px;top:496.50px;font-size:9px;color:#2a2a2a;line-height:10px">★</div>
  <div class="a" style="left:8.500px;top:498.00px;width:1px;height:6px;background:repeating-linear-gradient(#666 0 1px,transparent 1px 2.500px)"></div>
  <div class="a" style="left:23.5px;top:484.5px;width:34px;height:20px;border-radius:3px;background:#4e6b3f;overflow:hidden"><div class="a" style="left:3px;top:4.500px;width:8px;height:9px;background:#2c3328"></div><div class="a" style="left:12px;top:4px;width:20px;height:11px;background:#eef0e2"></div><div class="a" style="left:14px;top:7px;width:16px;height:6px;background:repeating-linear-gradient(90deg,#7d9a5a 0 1.500px,transparent 1.500px 3px)"></div></div>
  <div class="a" style="left:8.500px;top:520px;width:12px;text-align:center;font-size:9.5px;color:#333;line-height:10px">11</div>
  <div class="a" style="left:12px;top:531.00px;font-size:9px;color:#2a2a2a;line-height:10px">★</div>
  <div class="a" style="left:8.500px;top:532.50px;width:1px;height:6px;background:repeating-linear-gradient(#666 0 1px,transparent 1px 2.500px)"></div>
  <div class="a" style="left:23.5px;top:519px;width:34px;height:20px;border-radius:3px;background:#1d2119;overflow:hidden"><div class="a" style="left:0;top:13px;width:34px;height:7px;background:#10130d"></div><div class="a" style="left:3px;top:3px;width:8px;height:7px;background:#dfe6c8"></div><div class="a" style="left:13px;top:3px;width:8px;height:7px;background:#cfdcb0"></div><div class="a" style="left:23px;top:3px;width:8px;height:7px;background:#e6ead8"></div><div class="a" style="left:0;top:0;width:34px;height:20px;border:1.500px solid #4e6b3f;border-radius:3px"></div></div>
  <div class="a" style="left:8.500px;top:554.7px;width:12px;text-align:center;font-size:9.5px;color:#333;line-height:10px">12</div>
  <div class="a" style="left:23.5px;top:553.7px;width:34px;height:13px;border-radius:3px 3px 0 0;background:#f4f4f1;border:.6px solid #dcdcdc;overflow:hidden"><div class="a" style="left:12px;top:1px;width:21px;height:12px;background:#cdd6b8;background-image:repeating-linear-gradient(90deg,#8c9c74 0 1px,transparent 1px 4px),repeating-linear-gradient(#8c9c74 0 1px,transparent 1px 3.500px)"></div></div>
  <div class="a" style="left:103px;top:212.5px;width:518px;height:290.500px;background:#4e6b3f;box-shadow:0 1px 4px rgba(0,0,0,.18)"></div>
  <div class="a" style="left:103px;width:518px;top:213.65px;text-align:center;white-space:nowrap;font-family:'Liberation Serif',serif;font-size:7.58px;font-weight:bold;color:#f7f3e4;line-height:9.1px;">МІНІСТЕРСТВО ОСВІТИ І НАУКИ УКРАЇНИ</div>
  <div class="a" style="left:103px;width:518px;top:222.65px;text-align:center;white-space:nowrap;font-family:'Liberation Serif',serif;font-size:7.58px;font-weight:bold;color:#f7f3e4;line-height:9.1px;">СУМСЬКИЙ НАЦІОНАЛЬНИЙ АГРАРНИЙ УНІВЕРСИТЕТ</div>
  <div class="a" style="left:103px;width:518px;top:231.65px;text-align:center;white-space:nowrap;font-family:'Liberation Serif',serif;font-size:7.58px;font-weight:bold;color:#f7f3e4;line-height:9.1px;">ФАКУЛЬТЕТ ХАРЧОВИХ ТЕХНОЛОГІЙ</div>
  <div class="a" style="left:103px;width:518px;top:241.17px;text-align:center;white-space:nowrap;font-family:'Liberation Serif',serif;font-size:7.55px;font-weight:bold;color:#f7f3e4;line-height:9.06px;">Кафедра технологій та безпечності харчових продуктів</div>
  <div class="a" style="left:103px;width:518px;top:281.76px;text-align:center;white-space:nowrap;font-family:'Liberation Serif',serif;font-size:17.4px;font-weight:bold;color:#f7f3e4;line-height:20.88px;">КВАЛІФІКАЦІЙНА РОБОТА</div>
  <div class="a" style="left:103px;width:518px;top:305.62px;text-align:center;white-space:nowrap;font-family:'Liberation Serif',serif;font-size:8.3px;font-weight:bold;color:#f7f3e4;line-height:9.96px;">за другим рівнем вищої освіти</div>
  <div class="a" style="left:103px;width:518px;top:314.88px;text-align:center;white-space:nowrap;font-family:'Liberation Serif',serif;font-size:13.2px;font-weight:bold;color:#f7f3e4;line-height:15.84px;">на тему:</div>
  <div class="a" style="left:103px;width:518px;top:329.66px;text-align:center;white-space:nowrap;font-family:'Liberation Serif',serif;font-size:23.9px;font-weight:bold;color:#f7f3e4;line-height:28.68px;">Розробка технології граноли</div>
  <div class="a" style="left:103px;width:518px;top:355.16px;text-align:center;white-space:nowrap;font-family:'Liberation Serif',serif;font-size:23.9px;font-weight:bold;color:#f7f3e4;line-height:28.68px;">підвищеної харчової цінності</div>
  <div class="a" style="left:433.5px;top:428.0px;white-space:nowrap;font-family:'Liberation Serif',serif;font-size:10.800px;color:#f7f3e4;line-height:13px">Виконав:</div>
  <div class="a" style="left:493.8px;top:428.0px;white-space:nowrap;font-family:'Liberation Serif',serif;font-size:10.800px;font-weight:bold;color:#f7f3e4;line-height:13px">Дмитро КОВАЛЕНКО</div>
  <div class="a" style="left:433.5px;top:441.2px;white-space:nowrap;font-family:'Liberation Serif',serif;font-size:10.800px;color:#f7f3e4;line-height:13px">Група</div>
  <div class="a" style="left:495.5px;top:441.2px;white-space:nowrap;font-family:'Liberation Serif',serif;font-size:10.800px;font-weight:bold;color:#f7f3e4;line-height:13px">ХТ2401м</div>
  <div class="a" style="left:433.5px;top:454.4px;white-space:nowrap;font-family:'Liberation Serif',serif;font-size:10.800px;color:#f7f3e4;line-height:13px">Науковий</div>
  <div class="a" style="left:433.5px;top:467.7px;white-space:nowrap;font-family:'Liberation Serif',serif;font-size:10.800px;color:#f7f3e4;line-height:13px">керівник:</div>
  <div class="a" style="left:495.5px;top:467.7px;white-space:nowrap;font-family:'Liberation Serif',serif;font-size:10.800px;font-weight:bold;color:#f7f3e4;line-height:13px">Тетяна СИНЕНКО</div>
  <div class="a" style="left:325.5px;top:490.5px;white-space:nowrap;font-family:'Liberation Serif',serif;font-size:9.640px;color:#f7f3e4;line-height:12px">Суми – 2025 року</div>
  <svg class="a" style="left:106px;top:211px" width="52" height="58" viewBox="293 258 52 58" fill="none" stroke="#6c9d62" stroke-width="1"><defs><radialGradient id="glow"><stop offset="0" stop-color="#52ad55" stop-opacity=".75"/><stop offset="1" stop-color="#52ad55" stop-opacity="0"/></radialGradient></defs><ellipse cx="309" cy="284" rx="8" ry="7" fill="url(#glow)" stroke="none"/><ellipse cx="322" cy="275" rx="9" ry="8" fill="url(#glow)" stroke="none"/><path d="M296 283 C295 272 302 263 313 261.500 C320 260 326 262 329 265 C331 262.500 335 263 336 266 C341 270 343 277 342 284 C340 295 331 302 319 302 C306 302 297 294 296 283Z"/><path d="M311 262 C309 270 312 280 315 288 C312 284 306 281 300 281 M315 288 C318 281 327 279 335 284 C338 287 338 291 336 294 M315 288 V298 M304 290 C308 297 318 300 328 297 C333 295 336 291 337 287"/><path d="M314 274 C316 278 317 283 315 288 C312 284 312 278 314 274Z"/><path d="M298 278 C300 274 303 273 306 274 M330 266 C332 268 334 268 336 267"/><text x="318" y="312.500" text-anchor="middle" font-family="Liberation Sans, sans-serif" font-size="9.500" letter-spacing="1" fill="#6c9d62" stroke="none">СНАУ</text></svg>
  <svg class="a" style="left:542px;top:211px" width="80" height="62" viewBox="729 258 80 62" fill="none" stroke="#6c9d62" stroke-width=".9"><g transform="translate(0,1.300)"><path d="M752 273 C747 270 750 264 757 264 C758 260 766 259 769 262 C773 259 781 260 782 264 C789 264 793 270 788 274 C791 278 785 283 779 281 C776 284 770 284 768 281 C763 284 755 283 754 279 C750 279 749 275 752 273Z"/><path d="M756 268 H782 M754 272 H786 M756 276 H784 M760 264 V280 M766 262 V282 M772 262 V282 M778 264 V280" stroke-width=".6" opacity=".7"/><path d="M771 281 C769 285 769 289 772 292 M768 292 H775"/></g><text x="769.200" y="300.800" text-anchor="middle" font-family="Liberation Sans, sans-serif" font-size="7.900" fill="#58a055" stroke="none">Факультет харчових</text><text x="770" y="309.300" text-anchor="middle" font-family="Liberation Sans, sans-serif" font-size="7.900" fill="#58a055" stroke="none">технологій</text><text x="770.800" y="317.300" text-anchor="middle" font-family="Liberation Sans, sans-serif" font-size="7.900" fill="#58a055" stroke="none">СНАУ</text></svg>
  <svg class="a" style="left:173px;top:473px" width="180" height="70" viewBox="360 520 180 70" fill="none" stroke="#d94a3a" stroke-width="1.300" stroke-linecap="round"><path d="M372 528.300 C390 531 405 530 430 535 C455 541 485 553 516 562"/><path d="M373.400 541.500 C388 539 405 542 430 548 C460 557 495 573 529 580.500"/></svg>
  <div class="a" style="left:0;top:568.5px;width:644px;height:14.500px;background:#f3f3f3;border-top:.6px solid #e2e2e2"></div>
  <div class="a" style="left:15px;top:573px;font-size:7.200px;color:#666;white-space:nowrap;line-height:9px">Slide 1 of 19</div>
  <div class="a" style="left:67px;top:573px;font-size:7.200px;color:#666;white-space:nowrap;line-height:9px;letter-spacing:-.1px">English (U.S.)</div>
  <div class="a" style="left:260px;top:573px;font-size:7.200px;color:#666;white-space:nowrap;line-height:9px">Give Feedback to Microsoft</div>
  <svg class="a" style="left:355.5px;top:573.5px" width="8" height="8" viewBox="0 0 8 8" fill="none" stroke="#555" stroke-width=".8"><path d="M.8 .8 H7.200 V4.800 L4.800 7.200 H.8Z M7.200 4.800 H4.800 V7.200"/></svg>
  <div class="a" style="left:366.8px;top:573px;font-size:7.200px;color:#666;white-space:nowrap;line-height:9px">Notes</div>
  <div class="a" style="left:389.7px;top:569px;width:24.500px;height:14px;background:#dadada;border:.7px solid #aaa;border-radius:2px"></div>
  <svg class="a" style="left:397.5px;top:573px" width="9" height="8" viewBox="0 0 9 8" fill="none" stroke="#444" stroke-width=".9"><rect x=".6" y=".6" width="7.800" height="6.300" rx=".8"/><rect x="2.400" y="2.400" width="4.200" height="2.700" fill="#666" stroke="none"/></svg>
  <svg class="a" style="left:422.5px;top:573px" width="8" height="8" viewBox="0 0 8 8" fill="none" stroke="#555" stroke-width=".8"><rect x=".5" y=".5" width="2.800" height="2.800" rx=".6"/><rect x="4.700" y=".5" width="2.800" height="2.800" rx=".6"/><rect x=".5" y="4.700" width="2.800" height="2.800" rx=".6"/><rect x="4.700" y="4.700" width="2.800" height="2.800" rx=".6"/></svg>
  <svg class="a" style="left:448px;top:572.5px" width="8" height="9" viewBox="0 0 8 9" fill="none" stroke="#555" stroke-width=".8"><path d="M.5 .8 H7.500 M1.200 .8 V5 H6.800 V.8 M4 5 V6.500 M2.500 8.300 L4 6.500 L5.500 8.300"/></svg>
  <div class="a" style="left:473px;top:577px;width:7px;height:.9px;background:#777"></div>
  <div class="a" style="left:495.4px;top:576.8px;width:8px;height:1px;background:#c43e1c"></div>
  <div class="a" style="left:503px;top:576.8px;width:57px;height:1px;background:#555"></div>
  <div class="a" style="left:500.3px;top:574.6px;width:5.400px;height:5.400px;border-radius:50%;background:#c43e1c"></div>
  <svg class="a" style="left:574.5px;top:573.5px" width="7" height="7" viewBox="0 0 7 7"><path d="M3.500 .3 V6.700 M.3 3.500 H6.700" stroke="#555" stroke-width=".9"/></svg>
  <div class="a" style="left:594.6px;top:573px;font-size:7.200px;color:#666;white-space:nowrap;line-height:9px;color:#888;font-size:7px">64%</div>
  <svg class="a" style="left:618.5px;top:573px" width="9" height="9" viewBox="0 0 9 9" fill="none" stroke="#666" stroke-width=".8"><rect x="2.800" y="2.800" width="3.400" height="3.400"/><path d="M4.500 0 V2 M4.500 7 V9 M0 4.500 H2 M7 4.500 H9"/></svg>
  <!--PP3-->
</div>

<!-- TOAST -->
<div class="a" style="left:511px;top:62px;width:260px;height:38px;border-radius:10px;background:#0c0e13"></div>
<div class="a" style="left:525px;top:74px;white-space:nowrap;color:#f2f2f2;font-size:11.5px;letter-spacing:-.45px;line-height:15px">Not hearing anything?</div>
<div class="a" style="left:636px;top:69.500px;width:97px;height:22.500px;border-radius:6px;background:#0e72ed"></div>
<div class="a" style="left:636px;top:73.700px;width:97px;text-align:center;white-space:nowrap;color:#fff;font-size:11px;font-weight:bold;letter-spacing:-.15px;line-height:15px">Turn up volume</div>
<svg class="a" style="left:747.500px;top:76.500px" width="8" height="8" viewBox="0 0 8 8"><path d="M.8 .8 L7.200 7.200 M7.200 .8 L.8 7.200" stroke="#fff" stroke-width="1.200"/></svg>

<!-- TILES -->
<div id="tiles">
<div class="a tile" style="top:91px;height:82.500px;border-radius:5px 5px 0 0;background:#b7c3c9">
  <div class="a" style="left:0;top:0;width:84px;height:83px;background:linear-gradient(90deg,#aebcc4 0,#c2cdd3 12%,#b3c2ca 22%,#d5dde1 30%,#b9c7ce 36%,#c4d0d5 45%,#dbe2e5 50%,#b4c4cc 56%,#a9c0c9 70%,#9fbcc6 85%,#8fa9b0 100%)"></div>
  <div class="a" style="left:52px;top:44px;width:31px;height:22px;background:linear-gradient(90deg,#a5c6ce,#9cc2cb 60%,#86a5ac)"></div>
  <svg class="a" style="left:0;top:0" width="84" height="83" viewBox="0 0 84 83"><defs><linearGradient id="pg" x1="0" y1="0" x2="1" y2="0"><stop offset="0" stop-color="#c5cfdd"/><stop offset=".14" stop-color="#b9c6dc"/><stop offset=".26" stop-color="#5f9bd6"/><stop offset=".45" stop-color="#3f7cc6"/><stop offset=".62" stop-color="#5aa6dc"/><stop offset=".8" stop-color="#35569f"/><stop offset="1" stop-color="#27357a"/></linearGradient></defs><path d="M6 15 L66 8.500 L67 45 L36 42 L6 37Z" fill="url(#pg)"/><ellipse cx="38" cy="27" rx="20" ry="7" fill="#9ccbea" opacity=".55" transform="rotate(-8 38 27)"/><ellipse cx="42" cy="35" rx="14" ry="4" fill="#dbe8f5" opacity=".5"/><circle cx="12" cy="21" r="3" fill="#d0505c" opacity=".85"/><circle cx="59" cy="15" r="3" fill="#e9e3f2" opacity=".7"/><path d="M28 20 L50 33" stroke="#c98fc8" stroke-width="2" opacity=".5"/></svg>
  <div class="a" style="left:0;top:37px;width:33px;height:29px;background:#181a1c;transform:skewY(2.500deg)"></div>
  <div class="a" style="left:38px;top:49px;width:14px;height:16px;background:#dfe6e2"></div>
  <div class="a" style="left:84px;top:0;width:62px;height:83px;background:linear-gradient(180deg,#b58e66 0,#c79868 18%,#c49465 55%,#b98855 100%)"></div>
  <div class="a" style="left:83px;top:0;width:6px;height:83px;background:linear-gradient(90deg,#6f5a48,#9a7653 60%,rgba(180,140,100,0))"></div>
  <div class="a" style="left:83px;top:0;width:63px;height:5px;background:linear-gradient(90deg,#8c8d88,#a0a39f 40%,#c5c6c2 70%,#b9b9b4)"></div>
  <div class="a" style="left:86px;top:0;width:9px;height:5px;background:#b8453a"></div>
  <div class="a" style="left:88.500px;top:11px;width:24px;height:32px;background:#edeae4;box-shadow:0 0 1px #8a6a4c"></div>
  <div class="a" style="left:93px;top:16px;width:13px;height:20px;background:repeating-linear-gradient(#c4c2bd 0 1px,transparent 1px 3px)"></div>
  <div class="a" style="left:119px;top:13px;width:27px;height:7.500px;background:#e6e3de"></div>
  <div class="a" style="left:130px;top:20px;width:16px;height:33px;background:linear-gradient(180deg,#e3dedc,#d7c4c4 50%,#e0dad7)"></div>
  <div class="a" style="left:122px;top:32px;width:4px;height:21px;background:repeating-linear-gradient(#dccfc0 0 2px,transparent 2px 4.500px)"></div>
  <div class="a" style="left:136px;top:54px;width:10px;height:10px;background:#3a332e"></div>
  <div class="a" style="left:120px;top:58px;width:10px;height:2px;background:#6e5a48"></div>
  <div class="a" style="left:98px;top:71px;width:28px;height:3px;background:#c9c2b8;border-radius:1px;opacity:.85"></div>
  <div class="a" style="left:0px;top:64.5px;height:17.5px;width:92.5px;background:rgba(30,31,33,.8);border-radius:0 5px 0 0"></div><svg class="a" style="left:5px;top:66.5px" width="11" height="13" viewBox="0 0 11 13" fill="none"><rect x="3.800" y="1" width="3.400" height="6.500" rx="1.700" fill="#e0284f"/><path d="M1.800 6 A3.700 3.700 0 0 0 9.200 6 M5.500 9.800 V11.800" stroke="#e0284f" stroke-width="1"/><path d="M9.800 .8 L1.200 12" stroke="#e0284f" stroke-width="1.200"/></svg><div class="a" style="left:21px;top:65.800px;color:#fff;font-size:10.500px;letter-spacing:-0.58px;white-space:nowrap;line-height:14px">Кафедра ТБХП</div>
</div>
<div class="a tile" style="top:173.500px;height:83px;background:#1a1b1d">
  <div class="a" style="left:17.800px;top:.5px;width:110px;height:82px;background:radial-gradient(ellipse at 45% 20%,#e1e5e8 0,#cfd6db 45%,#c2cad1 100%);overflow:hidden">
    <div class="a" style="left:0;top:0;width:110px;height:60px;background:repeating-linear-gradient(45deg,rgba(190,205,215,.35) 0 3px,transparent 3px 8px),repeating-linear-gradient(-45deg,rgba(190,205,215,.35) 0 3px,transparent 3px 8px)"></div>
    <div class="a" style="left:80px;top:24px;width:32px;height:46px;border-radius:10px;background:radial-gradient(ellipse,#a67c55 0,#b99472 45%,rgba(200,185,170,0) 75%)"></div>
    <div class="a" style="left:0;top:53px;width:34px;height:13px;background:linear-gradient(180deg,rgba(70,72,78,0),#3b3d42 40%,#4a4c51)"></div>
    <div class="a" style="left:0;top:64px;width:40px;height:20px;background:#7f8186"></div>
    <div class="a" style="left:72px;top:53px;width:26px;height:30px;background:#17181a;border-radius:6px 14px 0 0"></div>
    <div class="a" style="left:33px;top:12px;width:43px;height:58px;border-radius:21px 21px 12px 14px;background:linear-gradient(90deg,#4a2622 0,#5e302a 25%,#3b2220 60%,#2f1d1c 100%)"></div>
    <div class="a" style="left:45px;top:18px;width:22px;height:34px;border-radius:10px 11px 12px 12px;background:radial-gradient(ellipse at 50% 45%,#dcae9c 0,#c99584 65%,#a06e60 100%)"></div>
    <div class="a" style="left:44px;top:52px;width:70px;height:32px;border-radius:18px 40px 0 0;background:linear-gradient(180deg,#e4e1e3,#d5d1d6)"></div>
  </div>
  <div class="a" style="left:0px;top:64.5px;height:17.5px;width:98px;background:rgba(30,31,33,.8);border-radius:0 5px 0 0"></div><svg class="a" style="left:5px;top:66.5px" width="11" height="13" viewBox="0 0 11 13" fill="none"><rect x="3.800" y="1" width="3.400" height="6.500" rx="1.700" fill="#e0284f"/><path d="M1.800 6 A3.700 3.700 0 0 0 9.200 6 M5.500 9.800 V11.800" stroke="#e0284f" stroke-width="1"/><path d="M9.800 .8 L1.200 12" stroke="#e0284f" stroke-width="1.200"/></svg><div class="a" style="left:21px;top:65.800px;color:#fff;font-size:10.500px;letter-spacing:-0.26px;white-space:nowrap;line-height:14px">Tetiana Synenko</div>
</div>
<div class="a tile" style="top:256.500px;height:82px;background:#b9cf8b">
  <div class="a" style="left:0;top:0;width:146px;height:82px;background:linear-gradient(180deg,#b3ca8a 0,#bed392 35%,#b5cd86 100%)"></div>
  <div class="a" style="left:1px;top:3px;width:12px;height:20px;background:#c2c8c6;border:1px solid #78876f"></div>
  <div class="a" style="left:16px;top:0;width:17px;height:21px;background:#c9cdc9;border:1px solid #78876f"></div>
  <div class="a" style="left:35px;top:0;width:16.500px;height:20.500px;background:#bcc5c8;border:1px solid #78876f"></div>
  <div class="a" style="left:55px;top:0;width:16px;height:20px;background:#b7c1c4;border:1px solid #78876f"></div>
  <div class="a" style="left:74.500px;top:0;width:16px;height:17px;background:#c3c9c4;border:1px solid #8a987f"></div>
  <div class="a" style="left:95px;top:0;width:17px;height:17.500px;background:#bcc6c6;border:1px solid #8a987f"></div>
  <div class="a" style="left:117px;top:0;width:16px;height:16.500px;background:#b5bfc9;border:1px solid #94a38a"></div>
  <div class="a" style="left:9px;top:24px;width:24.500px;height:16px;background:#c3cbcb;border:1px solid #78876f"></div>
  <div class="a" style="left:36px;top:23.500px;width:21.500px;height:22.500px;background:#bcc9cc;border:1px solid #9aab8f"></div>
  <div class="a" style="left:120px;top:23px;width:19.500px;height:24px;background:#b3c0cc;border:1px solid #9aab8f"></div>
  <div class="a" style="left:103px;top:20px;width:9px;height:9px;background:#c3cbc6;border:1px solid #8a987f"></div>
  <div class="a" style="left:47px;top:17px;width:92px;height:90px;border-radius:42px 46px 10px 0;background:linear-gradient(100deg,#7f6b4c 0,#94805c 20%,#a8946e 50%,#cdbd9c 80%,#dccfb4 100%)"></div>
  <div class="a" style="left:59px;top:27px;width:58px;height:70px;border-radius:26px 30px 20px 20px;background:radial-gradient(ellipse at 45% 40%,#e0b59c 0,#d3a68d 55%,#bf9078 100%)"></div>
  <div class="a" style="left:68px;top:58px;width:14px;height:3px;border-radius:2px;background:#7d5a4c;opacity:.65"></div>
  <div class="a" style="left:93px;top:58px;width:14px;height:3px;border-radius:2px;background:#7d5a4c;opacity:.65"></div>
  <div class="a" style="left:2.500px;top:64.500px;height:16px;width:100.500px;background:rgba(45,44,40,.8);border-radius:5px"></div>
  <svg class="a" style="left:6px;top:66px" width="11" height="13" viewBox="0 0 11 13" fill="none"><rect x="3.800" y="1" width="3.400" height="6.500" rx="1.700" fill="#e0284f"/><path d="M1.800 6 A3.700 3.700 0 0 0 9.200 6 M5.500 9.800 V11.800" stroke="#e0284f" stroke-width="1"/><path d="M9.800 .8 L1.200 12" stroke="#e0284f" stroke-width="1.200"/></svg>
  <div class="a" style="left:21px;top:65.500px;color:#fff;font-size:10.500px;letter-spacing:-.15px;white-space:nowrap;line-height:14px">Марина Самілик</div>
</div>
<div class="a tile" style="left:1078.500px;width:147.500px;top:338px;height:84px;background:#1b1c1f;border:2px solid #22dca2">
  <div class="a" style="left:39px;top:7.500px;width:65px;height:64px;border-radius:8px;background:#5b63c9"></div>
  <div class="a" style="left:39px;top:18px;width:65px;text-align:center;color:#fff;font-size:37px;line-height:44px;-webkit-text-stroke:.7px #fff">D</div>
  <div class="a" style="left:0;top:63.500px;width:144px;height:17px;background:rgba(27,28,31,.9)"></div>
  <div class="a" style="left:3px;top:65px;color:#fff;font-size:10.500px;letter-spacing:-.12px;white-space:nowrap;line-height:14px">Коваленко Дмитро Володи...</div>
</div>
<div class="a tile" style="top:422px;height:81.500px;background:#82897d">
  <div class="a" style="left:0;top:0;width:146px;height:82px;background:linear-gradient(180deg,#b1b3ab 0,#a9aca3 22%,#8f9186 36%,#6f6e5b 52%,#655f4c 70%,#6a624f 100%)"></div>
  <div class="a" style="left:88px;top:0;width:58px;height:46px;background:linear-gradient(180deg,#92958d,#8a8d84 70%,rgba(120,120,105,0))"></div>
  <div class="a" style="left:0;top:26px;width:62px;height:22px;border-radius:0 20px 0 0;background:linear-gradient(180deg,rgba(95,94,76,0),#5f5e4c 50%,#5a5746)"></div>
  <div class="a" style="left:100px;top:46px;width:46px;height:36px;background:linear-gradient(180deg,rgba(122,116,95,0),#7a745f 40%,#6f6955)"></div>
  <div class="a" style="left:54px;top:58px;width:80px;height:26px;border-radius:22px 36px 0 0;background:#1f2226"></div>
  <div class="a" style="left:63px;top:14px;width:37px;height:30px;border-radius:18px 18px 6px 6px;background:#4e4439"></div>
  <div class="a" style="left:64px;top:20px;width:35px;height:44px;border-radius:14px 14px 16px 16px;background:radial-gradient(ellipse at 50% 45%,#d6a188 0,#c58e76 60%,#9b6a52 100%)"></div>
  <div class="a" style="left:69px;top:36px;width:9px;height:2.500px;border-radius:2px;background:#5a3f34;opacity:.75"></div>
  <div class="a" style="left:85px;top:36px;width:9px;height:2.500px;border-radius:2px;background:#5a3f34;opacity:.75"></div>
  <div class="a" style="left:74px;top:53px;width:14px;height:2.500px;border-radius:2px;background:#8a4f48;opacity:.7"></div>
  <div class="a" style="left:0px;top:64px;height:17.5px;width:93.5px;background:rgba(30,31,33,.8);border-radius:0 5px 0 0"></div><div class="a" style="left:4.7px;top:65.800px;color:#fff;font-size:10.500px;letter-spacing:0.03px;white-space:nowrap;line-height:14px">Дмитрий Черевко</div>
</div>
<div class="a tile" style="top:504px;height:82px;border-radius:0 0 5px 5px;background:#cfd2da">
  <div class="a" style="left:0;top:0;width:146px;height:82px;background:linear-gradient(90deg,#241d1b 0,#2c2320 20%,#3a302c 25%,#6f6a68 28%,#8e8a8c 33%,#b9b7bd 37%,#eceaf2 41%,#f1eff6 60%,#e9e8f0 84%,#bdbec8 87%,#c9cad4 90%,#d8d9e2 100%)"></div>
  <div class="a" style="left:0;top:0;width:36px;height:30px;background:linear-gradient(180deg,#1c1716,rgba(36,29,27,0))"></div>
  <div class="a" style="left:128px;top:30px;width:18px;height:36px;background:linear-gradient(180deg,rgba(190,192,204,0),#b4b6c2 40%,#c6c8d2)"></div>
  <div class="a" style="left:68px;top:10px;width:26px;height:24px;border-radius:13px 13px 6px 6px;background:#6a625e"></div>
  <div class="a" style="left:70px;top:16px;width:22px;height:31px;border-radius:10px 10px 11px 11px;background:radial-gradient(ellipse at 50% 50%,#cdaea2 0,#b99a8e 65%,#957468 100%)"></div>
  <div class="a" style="left:71px;top:27px;width:20px;height:3.500px;border-radius:1.500px;border:1px solid #6a5a55;opacity:.6"></div>
  <div class="a" style="left:48px;top:42px;width:90px;height:42px;border-radius:26px 40px 0 0;background:#6f6555;background-image:radial-gradient(circle at 18% 35%,#8d8372 0 5px,transparent 6px),radial-gradient(circle at 55% 45%,#4b4236 0 5px,transparent 6px),radial-gradient(circle at 78% 30%,#90877a 0 5px,transparent 6px),radial-gradient(circle at 32% 75%,#50483a 0 6px,transparent 7px),radial-gradient(circle at 72% 78%,#867c6b 0 5px,transparent 6px),radial-gradient(circle at 90% 60%,#4f463a 0 4px,transparent 5px)"></div>
  <div class="a" style="left:80px;top:46px;width:8px;height:22px;background:#3a3a30"></div>
  <div class="a" style="left:76px;top:67px;width:17px;height:16px;background:#a09880"></div>
  <div class="a" style="left:0px;top:64.5px;height:17.5px;width:58px;background:rgba(30,31,33,.8);border-radius:0 5px 0 0"></div><svg class="a" style="left:5px;top:66.5px" width="11" height="13" viewBox="0 0 11 13" fill="none"><rect x="3.800" y="1" width="3.400" height="6.500" rx="1.700" fill="#e0284f"/><path d="M1.800 6 A3.700 3.700 0 0 0 9.200 6 M5.500 9.800 V11.800" stroke="#e0284f" stroke-width="1"/><path d="M9.800 .8 L1.200 12" stroke="#e0284f" stroke-width="1.200"/></svg><div class="a" style="left:21px;top:65.800px;color:#fff;font-size:10.500px;letter-spacing:-0.42px;white-space:nowrap;line-height:14px">Оленка</div>
</div>
<div class="a" style="left:1121.500px;top:586px;width:60px;height:27px;border-radius:0 0 6px 6px;background:#1e1f21"></div>
<svg class="a" style="left:1145px;top:597px" width="13" height="8" viewBox="0 0 13 8"><path d="M1.300 1.300 L6.500 6.300 L11.700 1.300" fill="none" stroke="#e0e0e0" stroke-width="1.500"/></svg>
<div class="a" style="left:1017px;top:320px;width:2.500px;height:34px;border-radius:1.500px;background:#8a8a8a"></div>
</div>

<!-- ZOOM BAR -->
<div id="zbar" class="a">
<svg class="a" style="left:32px;top:8px" width="24" height="23" viewBox="0 0 24 23" fill="none"><rect x="8.700" y="1.500" width="6.200" height="11.500" rx="3.100" stroke="#f2f2f2" stroke-width="1.300"/><path d="M5.800 10 A6 6 0 0 0 17.800 10 M11.800 16.200 V20 M8.300 20.300 H15.300" stroke="#f2f2f2" stroke-width="1.300" stroke-linecap="round"/><path d="M21.500 2 L2 20" stroke="#e0284f" stroke-width="1.600" stroke-linecap="round"/></svg>
<svg class="a" style="left:66px;top:16.200000000000045px" width="8" height="6" viewBox="0 0 8 6"><path d="M1.200 4.600 L4 1.800 L6.800 4.600" fill="none" stroke="#f2f2f2" stroke-width="1.400"/></svg>
<div class="a l" style="left:43.7px;top:32.500px;font-size:10.300px;letter-spacing:-0.36px;line-height:13px">Audio</div>
<svg class="a" style="left:110.500px;top:13px" width="22" height="13" viewBox="0 0 22 13" fill="none" stroke="#f2f2f2" stroke-width="1.300" stroke-linejoin="round"><rect x=".8" y=".8" width="13.500" height="11.400" rx="2.800"/><path d="M16.200 5 L20.800 1.800 V11.200 L16.200 8Z"/></svg>
<svg class="a" style="left:148px;top:16.200000000000045px" width="8" height="6" viewBox="0 0 8 6"><path d="M1.200 4.600 L4 1.800 L6.800 4.600" fill="none" stroke="#f2f2f2" stroke-width="1.400"/></svg>
<div class="a l" style="left:121.5px;top:32.500px;font-size:10.300px;letter-spacing:0px;line-height:13px">Video</div>
<svg class="a" style="left:449px;top:11px" width="17" height="16" viewBox="0 0 17 16" fill="none" stroke="#f2f2f2" stroke-width="1.300"><circle cx="5.300" cy="3.600" r="2.700"/><circle cx="12.800" cy="5.800" r="2"/><path d="M.8 12.500 A2.900 2.900 0 0 1 3.700 9.600 H6.900 A2.900 2.900 0 0 1 9.800 12.500 V13.300 A1.500 1.500 0 0 1 8.300 14.800 H2.300 A1.500 1.500 0 0 1 .8 13.300Z"/><path d="M12 10.300 H13.800 A2.500 2.500 0 0 1 16.300 12.800 V13.500 A1.300 1.300 0 0 1 15 14.800 H11.600"/></svg>
<div class="a" style="left:470.500px;top:12.500px;font-size:10px;color:#c4c4c4;letter-spacing:-.6px;line-height:12px">15</div>
<svg class="a" style="left:496.5px;top:16.200000000000045px" width="8" height="6" viewBox="0 0 8 6"><path d="M1.200 4.600 L4 1.800 L6.800 4.600" fill="none" stroke="#f2f2f2" stroke-width="1.400"/></svg>
<div class="a l" style="left:457.1px;top:32.500px;font-size:10.300px;letter-spacing:-0.33px;line-height:13px">Participants</div>
<svg class="a" style="left:538.500px;top:9.500px" width="20" height="19" viewBox="0 0 20 19" fill="none" stroke="#f2f2f2" stroke-width="1.300" stroke-linejoin="round"><path d="M5.500 4 V3.300 A2.500 2.500 0 0 1 8 .8 H16.700 A2.500 2.500 0 0 1 19.200 3.300 V8.700 A2.500 2.500 0 0 1 16.700 11.200 H16"/><path d="M3.300 4.300 H12.200 A2.500 2.500 0 0 1 14.700 6.800 V11.700 A2.500 2.500 0 0 1 12.200 14.200 H7.800 L4.300 17.700 V14.200 H3.300 A2.500 2.500 0 0 1 .8 11.700 V6.800 A2.500 2.500 0 0 1 3.300 4.300Z"/><circle cx="4.800" cy="9.300" r=".6" fill="#f2f2f2"/><circle cx="7.800" cy="9.300" r=".6" fill="#f2f2f2"/><circle cx="10.800" cy="9.300" r=".6" fill="#f2f2f2"/></svg>
<svg class="a" style="left:572.3px;top:16.200000000000045px" width="8" height="6" viewBox="0 0 8 6"><path d="M1.200 4.600 L4 1.800 L6.800 4.600" fill="none" stroke="#f2f2f2" stroke-width="1.400"/></svg>
<div class="a l" style="left:549.5px;top:32.500px;font-size:10.300px;letter-spacing:-0.55px;line-height:13px">Chat</div>
<svg class="a" style="left:609.500px;top:10.500px" width="22" height="17" viewBox="0 0 22 17" fill="none" stroke="#f2f2f2" stroke-width="1.300" stroke-linejoin="round"><path d="M11 3.300 C9.500 .6 5.500 .2 3 2 C.2 4 .3 7.500 2.800 10 C5 12.200 8.500 14.500 11 16 C13.500 14.500 17 12.200 19.200 10 C21.700 7.500 21.800 4 19 2 C16.500 .2 12.500 .6 11 3.300Z"/></svg>
<svg class="a" style="left:639px;top:16.200000000000045px" width="8" height="6" viewBox="0 0 8 6"><path d="M1.200 4.600 L4 1.800 L6.800 4.600" fill="none" stroke="#f2f2f2" stroke-width="1.400"/></svg>
<div class="a l" style="left:620.2px;top:32.500px;font-size:10.300px;letter-spacing:-0.54px;line-height:13px">React</div>
<div class="a" style="left:683.500px;top:11px;width:21px;height:15px;border-radius:3.500px;background:#23d981"></div>
<svg class="a" style="left:689px;top:13.500px" width="10" height="10" viewBox="0 0 10 10"><path d="M5 .8 L1.200 4.800 H3.700 V9.200 H6.300 V4.800 H8.800Z" fill="#0a0a0a"/></svg>
<div class="a l" style="left:694.7px;top:32.500px;font-size:10.300px;letter-spacing:-0.46px;line-height:13px">Share</div>
<svg class="a" style="left:764px;top:8px" width="22" height="22" viewBox="0 0 22 22"><defs><linearGradient id="aig" x1="0" y1="0" x2="1" y2="1"><stop offset="0" stop-color="#f4fbff"/><stop offset="1" stop-color="#a8d8ec"/></linearGradient></defs><path d="M10.300 1.700 C11.200 7.300 14.200 10.300 19.800 11.200 C14.200 12.100 11.200 15.100 10.300 20.700 C9.400 15.100 6.400 12.100 .8 11.200 C6.400 10.300 9.400 7.300 10.300 1.700Z" fill="url(#aig)"/><path d="M17 .8 C17.300 3 18.200 3.900 20.400 4.300 C18.200 4.700 17.300 5.600 17 7.800 C16.700 5.600 15.800 4.700 13.600 4.300 C15.800 3.900 16.700 3 17 .8Z" fill="#eaf6fb"/></svg>
<div class="a l" style="left:774.7px;top:32.500px;font-size:10.300px;letter-spacing:-0.27px;line-height:13px">AI Companion</div>
<svg class="a" style="left:844px;top:8px" width="22" height="22" viewBox="0 0 22 22" fill="none" stroke="#f2f2f2"><circle cx="11" cy="11" r="9.700" stroke-width="1.300"/><circle cx="11" cy="6.300" r="1.100" fill="#f2f2f2" stroke="none"/><path d="M9.300 9.300 H11.300 V15.300 M8.800 15.500 H13.500" stroke-width="1.400"/></svg>
<div class="a l" style="left:854.6px;top:32.500px;font-size:10.300px;letter-spacing:-0.06px;line-height:13px">Meeting info</div>
<svg class="a" style="left:919.200px;top:8px" width="22" height="22" viewBox="0 0 22 22" fill="none" stroke="#f2f2f2"><circle cx="11" cy="11" r="9.700" stroke-width="1.300"/><circle cx="6.500" cy="11" r="1.150" fill="#f2f2f2" stroke="none"/><circle cx="11" cy="11" r="1.150" fill="#f2f2f2" stroke="none"/><circle cx="15.500" cy="11" r="1.150" fill="#f2f2f2" stroke="none"/></svg>
<div class="a l" style="left:930px;top:32.500px;font-size:10.300px;letter-spacing:0px;line-height:13px">More</div>
<svg class="a" style="left:1228px;top:7.500px" width="24" height="23" viewBox="0 0 24 23" fill="none"><path d="M11 1.800 H21.500 V18.500 L15.800 21 V4.200 L21.200 1.900" stroke="#e0284f" stroke-width="1.300" stroke-linejoin="round"/><circle cx="8.700" cy="6" r="2.200" stroke="#f2f2f2" stroke-width="1.300" fill="#000"/><path d="M6.800 9.500 C5 10.500 3.800 12.500 3.500 14.500 L5.300 14.800 L5.800 13 L6 15.800 L3 21.300 L5 21.700 L8 17.500 L9.500 21.700 L11.500 21.300 L10.300 15.800 L10.500 13.300 L12.500 14.800 L13.600 13.400 L10.800 10.200 C9.800 9.200 8 9 6.800 9.500Z" stroke="#f2f2f2" stroke-width="1.200" stroke-linejoin="round" fill="#000"/></svg>
<div class="a l" style="left:1239.6px;top:32.500px;font-size:10.300px;letter-spacing:-0.62px;line-height:13px">Leave</div>
</div>

<!-- TASKBAR -->
<div id="task" class="a">
<div class="a" style="left:0;top:0;width:1280px;height:1px;background:rgba(255,255,255,.08)"></div>
<svg class="a" style="left:16.500px;top:10px" width="20" height="20" viewBox="0 0 20 20"><defs><linearGradient id="wg" x1="0" y1="0" x2="1" y2="1"><stop offset="0" stop-color="#6fd4ff"/><stop offset="1" stop-color="#1a8fe0"/></linearGradient></defs><rect x="0" y="0" width="9.300" height="9.300" rx="1" fill="url(#wg)"/><rect x="10.700" y="0" width="9.300" height="9.300" rx="1" fill="url(#wg)"/><rect x="0" y="10.700" width="9.300" height="9.300" rx="1" fill="url(#wg)"/><rect x="10.700" y="10.700" width="9.300" height="9.300" rx="1" fill="url(#wg)"/></svg>
<svg class="a" style="left:54px;top:9.5px" width="21" height="21" viewBox="0 0 21 21" fill="none"><circle cx="9" cy="9" r="6.700" stroke="#ececec" stroke-width="2.200" fill="#3b3f4b"/><path d="M14 14 L19 19" stroke="#cfcfcf" stroke-width="2.600" stroke-linecap="round"/></svg>
<div class="a" style="left:91px;top:15px;width:15px;height:13px;border-radius:2px;background:#8d8f95"></div><div class="a" style="left:97px;top:10.5px;width:15.500px;height:13px;border-radius:2px;background:#f0f0f0;box-shadow:-1px 1px 0 #30343f"></div>
<div class="a" style="left:127.500px;top:9.5px;width:21.500px;height:21.500px;border-radius:50%;background:conic-gradient(from 200deg,#35c1f1 0,#2fd58a 25%,#6be06b 32%,#1b9de2 50%,#0c59a4 75%,#1a7fd0 100%)"></div><div class="a" style="left:134px;top:16.5px;width:11px;height:9px;border-radius:50%;background:#15254a"></div><div class="a" style="left:131px;top:13px;width:12px;height:7px;border-radius:6px 6px 0 0;background:#8fdcf7;opacity:.65"></div>
<div class="a" style="left:164px;top:9px;width:22px;height:22px;border-radius:50%;border:2px solid #f03a5c;background:#1a1730"></div><div class="a" style="left:167.500px;top:12.500px;width:15px;height:15px;border-radius:50%;background:#ee2f52"></div>
<div class="a" style="left:201.500px;top:10px;width:20px;height:19.500px;border-radius:3.500px;background:#0a1e3c;color:#31a8ff;font-size:10px;font-weight:bold;line-height:19.500px;text-align:center;letter-spacing:-.3px">Ps</div>
<div class="a" style="left:239.500px;top:9.5px;width:17.500px;height:21px;border-radius:2.500px;background:linear-gradient(180deg,#9fb3c4,#6d8296)"></div><div class="a" style="left:242px;top:12px;width:12.500px;height:4.500px;background:#2e3f52"></div><div class="a" style="left:242px;top:18.5px;width:12.500px;height:10px;background:repeating-linear-gradient(90deg,#e6edf3 0 3px,transparent 3px 4.700px),repeating-linear-gradient(#e6edf3 0 2.500px,#6d8296 2.500px 3.700px)"></div>
<div class="a" style="left:274px;top:10px;width:21px;height:20px;border-radius:3px;background:linear-gradient(180deg,#43b4ea,#1d86c8)"></div><div class="a" style="left:279px;top:14.5px;width:11px;height:11px;border:1.500px solid #e8f4fb;border-radius:1.500px"></div><div class="a" style="left:282px;top:18.5px;width:7px;height:5px;background:#e8f4fb"></div>
<div class="a" style="left:310.500px;top:9px;width:22px;height:22px;border-radius:50%;background:#0b55d9;border:1.500px solid #e8eefc;color:#fff;font-size:11px;font-style:italic;font-weight:bold;line-height:18px;text-align:center;letter-spacing:-.5px">hp</div>
<div class="a" style="left:348px;top:9.500px;width:20.500px;height:20.500px;border-radius:1.500px;background:linear-gradient(180deg,#2f74dc 0,#2a69cf 62%,#f2f5fa 62%,#e6ebf3 100%)"></div><div class="a" style="left:350px;top:14.500px;width:16px;height:1.800px;background:#f4f7fb;transform:rotate(24deg)"></div><div class="a" style="left:350.500px;top:25px;width:9px;height:1.500px;background:#2a69cf"></div>
<div class="a" style="left:379px;top:3px;width:32.500px;height:34px;border-radius:4px;background:rgba(255,255,255,.075)"></div><div class="a" style="left:385px;top:9.5px;width:20.500px;height:20.500px;border-radius:6.500px;background:linear-gradient(180deg,#2a73ff,#0b5cff);color:#e8f0ff;font-size:6px;font-weight:bold;line-height:20px;text-align:center;letter-spacing:-.1px">zoom</div><div class="a" style="left:389px;top:33px;width:12.500px;height:2.500px;border-radius:1.500px;background:#5fc3f5"></div>
<svg class="a" style="left:420px;top:9px" width="23" height="22" viewBox="0 0 23 22"><path d="M1 6 L8 3 L12 9 L16 1 L22 4 V17 L15 21 L3 17Z" fill="#2b6fd0"/><path d="M12 9 L16 1 L22 4 V17 L15 21Z" fill="#5a9cf0"/><rect x="3.500" y="7.500" width="10" height="10" rx="1.500" fill="#1b4fa8"/><text x="8.500" y="15.500" text-anchor="middle" font-family="Liberation Sans, sans-serif" font-size="8" font-weight="bold" fill="#fff">V</text></svg>
<div class="a" style="left:458px;top:11px;width:9px;height:5px;border-radius:1.500px 1.500px 0 0;background:#e9a71f"></div><div class="a" style="left:458px;top:13px;width:21px;height:16px;border-radius:2px;background:linear-gradient(180deg,#ffd65a,#f6bd2c)"></div><div class="a" style="left:463.500px;top:24.5px;width:10px;height:4.500px;border-radius:1px;background:#3b8ee0"></div><div class="a" style="left:465.500px;top:33.5px;width:5.500px;height:2px;border-radius:1px;background:#9a9ca6"></div>
<div class="a" style="left:494.500px;top:10.5px;width:20.500px;height:20.500px;border-radius:50%;background:conic-gradient(from -30deg,#ea4335 0 120deg,#fbbc05 120deg 240deg,#34a853 240deg 360deg)"></div><div class="a" style="left:500.500px;top:16.5px;width:8.500px;height:8.500px;border-radius:50%;background:#4285f4;border:1.500px solid #fff"></div><div class="a" style="left:507.500px;top:7px;width:10.500px;height:10.500px;border-radius:50%;background:radial-gradient(circle at 50% 40%,#c9a088 0 2.500px,#4a3228 3px)"></div><div class="a" style="left:502.500px;top:33.5px;width:5.500px;height:2px;border-radius:1px;background:#9a9ca6"></div>
<div class="a" style="left:536px;top:10px;width:15.500px;height:20px;border-radius:2px;background:linear-gradient(180deg,#41a5ee 0 25%,#2b7cd3 25% 50%,#185abd 50% 75%,#103f91 75%)"></div><div class="a" style="left:530px;top:14.5px;width:11.500px;height:11.500px;border-radius:1.500px;background:#185abd;color:#fff;font-size:8px;font-weight:bold;line-height:11.500px;text-align:center">W</div><div class="a" style="left:538.500px;top:33.5px;width:5.500px;height:2px;border-radius:1px;background:#9a9ca6"></div>
<svg class="a" style="left:924.500px;top:8px" width="24" height="18" viewBox="0 0 24 18"><defs><linearGradient id="cg" x1="0" y1="0" x2="0" y2="1"><stop offset="0" stop-color="#f2f6fc"/><stop offset="1" stop-color="#a9bfe0"/></linearGradient></defs><path d="M6 16.500 A5 5 0 0 1 5.500 6.600 A6.500 6.500 0 0 1 18 6.300 A5.200 5.200 0 0 1 18.300 16.500Z" fill="url(#cg)"/></svg>
<div class="a" style="left:952.500px;top:6.5px;font-size:10px;color:#f0f0f0;white-space:nowrap;line-height:12px">3°C</div>
<div class="a" style="left:952.500px;top:19.5px;font-size:10px;color:#f0f0f0;white-space:nowrap;line-height:12px;color:#c9ccd4">Cloudy</div>
<svg class="a" style="left:1061px;top:16.5px" width="10" height="7" viewBox="0 0 10 7"><path d="M1 5.600 L5 1.600 L9 5.600" fill="none" stroke="#f0f0f0" stroke-width="1.200"/></svg>
<svg class="a" style="left:1084.500px;top:12px" width="19" height="15" viewBox="0 0 19 15" fill="none" stroke="#5fc3f5" stroke-width="1.100"><rect x="3" y=".8" width="3.600" height="7" rx="1.800"/><path d="M1 6 A3.800 3.800 0 0 0 8.600 6 M4.800 10 V12.500"/><path d="M17.800 5 L10.500 8.200 L13.800 9.300 L14.800 12.500Z" stroke-linejoin="round"/></svg>
<div class="a" style="left:1116.500px;top:14px;font-size:9.300px;color:#f0f0f0;white-space:nowrap;line-height:12px">УКР</div>
<svg class="a" style="left:1149.500px;top:14px" width="14" height="11" viewBox="0 0 14 11" fill="none" stroke="#f2f2f2" stroke-width="1.200" stroke-linecap="round"><path d="M1 4 A8.500 8.500 0 0 1 13 4"/><path d="M3.200 6.300 A5.400 5.400 0 0 1 10.800 6.300"/><path d="M5.300 8.400 A2.500 2.500 0 0 1 8.700 8.400"/><circle cx="7" cy="9.800" r=".7" fill="#f2f2f2" stroke="none"/></svg>
<svg class="a" style="left:1169.500px;top:15px" width="14" height="10" viewBox="0 0 14 10" fill="none" stroke="#f2f2f2" stroke-width="1.100" stroke-linejoin="round"><path d="M.8 3.300 H2.800 L5.800 .8 V9.200 L2.800 6.700 H.8Z"/><path d="M8.500 3.200 L12.300 7 M12.300 3.200 L8.500 7"/></svg>
<svg class="a" style="left:1189.500px;top:15px" width="15" height="10" viewBox="0 0 15 10" fill="none"><rect x=".7" y=".9" width="11.600" height="8.200" rx="2" stroke="#f2f2f2" stroke-width="1.200"/><rect x="2.400" y="2.700" width="5.500" height="4.600" rx=".7" fill="#f2f2f2"/><path d="M13.600 3.600 V6.400" stroke="#f2f2f2" stroke-width="1.400" stroke-linecap="round"/></svg>
<div class="a" style="right:16px;top:7px;font-size:9.500px;letter-spacing:-.2px;color:#f0f0f0;white-space:nowrap;line-height:12px;text-align:right">10:05</div>
<div class="a" style="right:16px;top:20.2px;font-size:9.500px;letter-spacing:-.05px;color:#f0f0f0;white-space:nowrap;line-height:12px;text-align:right">04.12.2025</div>
</div>

</div>
</body>
</html>
